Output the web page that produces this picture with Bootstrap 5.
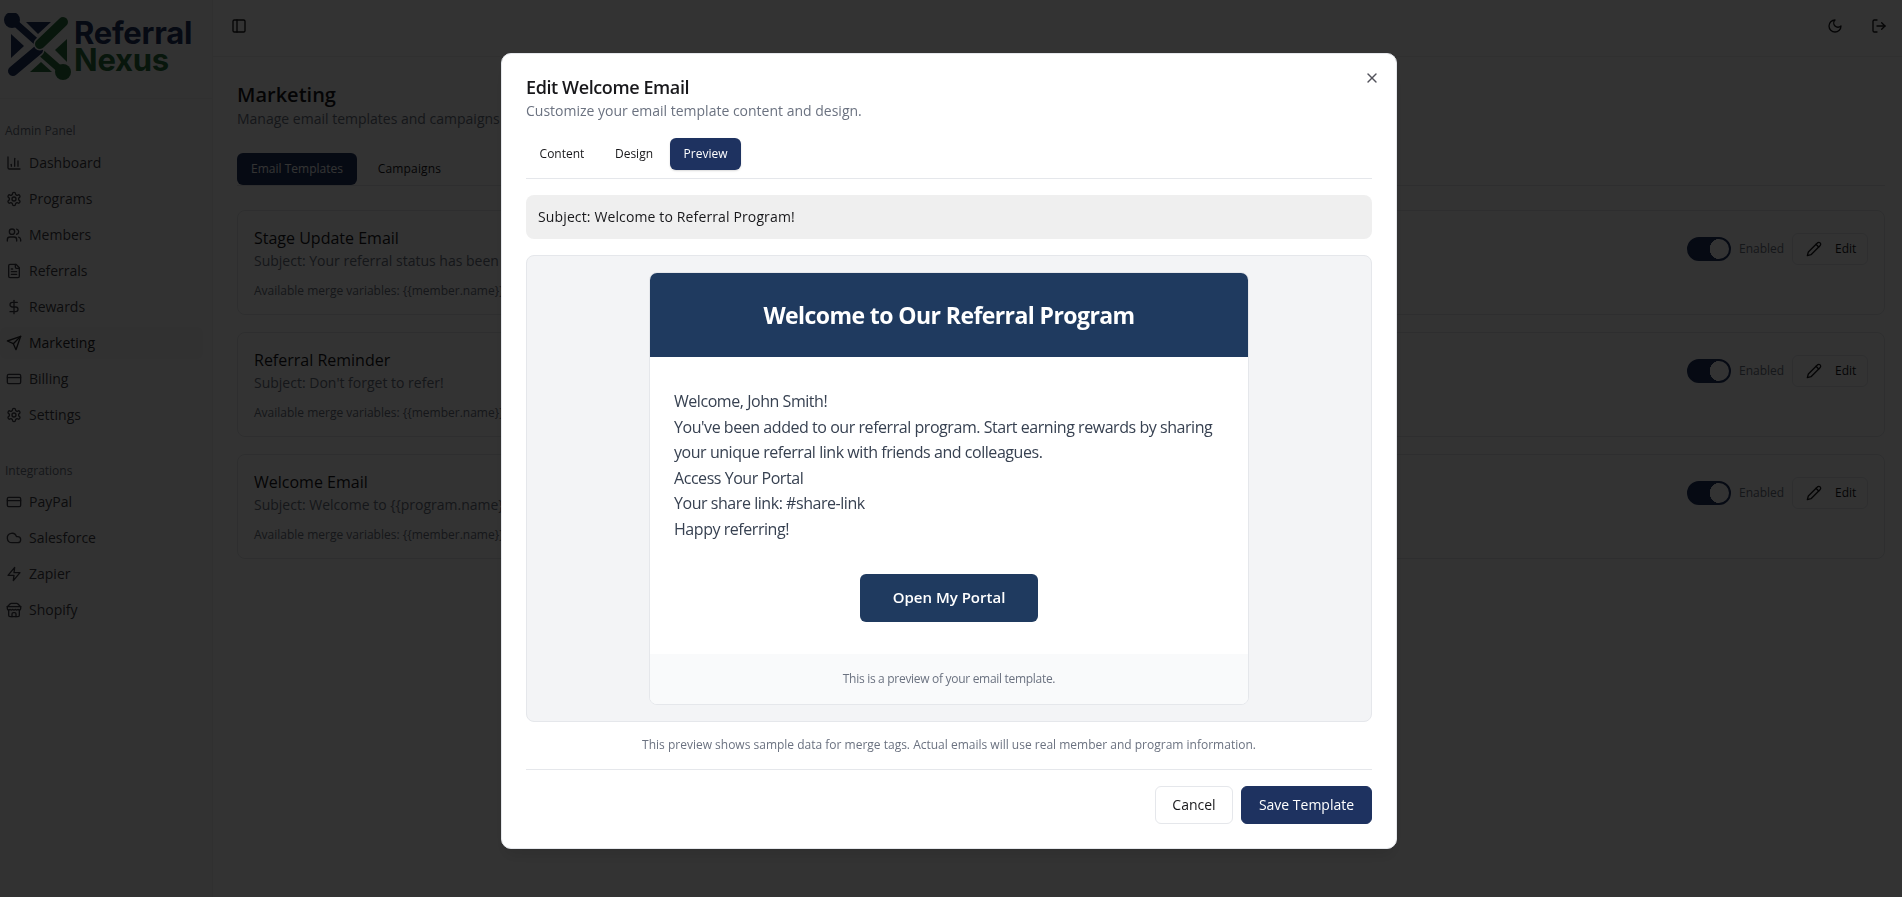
<!DOCTYPE html>
<html lang="en">
<head>
<meta charset="utf-8">
<title>Marketing</title>
<link rel="stylesheet" href="https://cdn.jsdelivr.net/npm/bootstrap@5.3.0/dist/css/bootstrap.min.css">
<style>
:root{--navy:#1e3260;--mailblue:#1f3a5f;--line:#e5e7eb;--muted:#6b7280;--leaf:#2a6f3c;}
html,body{height:100%;overflow:hidden;}
body{font-family:"Open Sans","Liberation Sans",sans-serif;font-size:14px;line-height:20px;color:#18181b;background:#fff;}
.ico{width:16px;height:16px;fill:none;stroke:currentColor;stroke-width:2;stroke-linecap:round;stroke-linejoin:round;flex:none;}
.shell{height:897px;}
.side{width:213px;flex:none;background:#fafafa;border-right:1px solid #f0f0f0;}
.brand{height:99px;border-bottom:1px solid #f0f0f0;padding:13px 0 0 4px;}
.brand svg{width:68px;height:68px;flex:none;}
.brand-name{font-family:Inter,"Liberation Sans",sans-serif;font-weight:700;font-size:31px;line-height:27px;letter-spacing:-.25px;margin-left:2px;margin-top:6px;}
.brand-name span{display:block;color:var(--navy);}
.brand-name span+span{color:var(--leaf);}
.side-label{font-size:12px;line-height:16px;color:#6b7280;padding-left:5px;}
.label-admin{margin-top:24px;}
.label-integrations{margin-top:32px;}
.side-nav{padding-right:9px;gap:4px;margin-top:8px;}
.nav-second{margin-top:7px;}
.side-link{height:32px;display:flex;align-items:center;gap:7px;padding-left:6px;color:#3f3f46;text-decoration:none;border-radius:6px;}
.side-link.on{background:#f4f4f5;color:#27272a;font-weight:500;}
.topbar{height:57px;border-bottom:1px solid #f0f0f0;padding:0 15px 4px 18px;}
.top-tools{gap:28px;}
.work{padding:24px 17px 0 24px;}
.page-title{font-size:20px;line-height:28px;font-weight:600;margin:0;}
.subtle{color:var(--muted);}
.tabline{border-bottom:1px solid #e5e7eb;gap:8px;height:33px;margin:24px 0;}
.tabbtn{height:32px;padding:0;text-align:center;font-size:12px;line-height:32px;font-weight:500;border-radius:6px;color:#18181b;background:none;border:0;}
.tabbtn.on{background:var(--navy);color:#fff;}
.w-email{width:120px;}.w-camp{width:89px;letter-spacing:.15px;}
.w-content{width:72px;}.w-design{width:64px;}.w-preview{width:71px;}
.tpl{border:1px solid var(--line);border-radius:8px;padding:16px 16px 15px;margin-bottom:17.5px;display:flex;justify-content:space-between;align-items:flex-start;}
.tpl h3{font-size:16px;line-height:22px;font-weight:500;margin:0 0 2px;}
.tpl small{display:block;font-size:12px;line-height:16px;margin-top:11.5px;color:var(--muted);}
.tpl-actions{gap:8px;margin-top:6px;}
.sw{padding:0;margin:4px 0 0;min-height:0;height:24px;display:flex;}
.form-switch.sw .form-check-input,.form-switch.sw .form-check-input:checked{width:44px;height:24px;margin:0;background-color:var(--navy);border:2px solid var(--navy);border-radius:12px;background-size:auto;background-position:0 0;background-image:radial-gradient(circle 10.5px at 31px 10px,#fff 96%,transparent 100%);}
.lbl-en{font-size:12px;line-height:16px;color:var(--muted);margin-top:8px;width:45px;white-space:nowrap;}
.editbtn{font-size:12px;line-height:16px;font-weight:500;height:32px;width:76px;padding:0 13px;display:flex;align-items:center;gap:13px;border:1px solid var(--line);border-radius:6px;background:#fff;color:#18181b;}
.shade{position:fixed;inset:0;background:#000;opacity:.8;z-index:1040;}
.dlg-wrap{position:fixed;inset:0;z-index:1050;padding-top:53px;}
.dlg{position:relative;width:896px;height:796px;margin-left:501px;background:#fff;border:1px solid #e5e7eb;border-radius:10px;padding:24px 24px 23px;box-shadow:0 10px 15px -3px rgba(0,0,0,.1);}
.dlg-x{position:absolute;top:16px;right:16px;padding:0;border:0;background:none;color:#52525b;line-height:0;}
.dlg h2{font-size:18px;line-height:18px;font-weight:600;margin:0;letter-spacing:-.4px;}
.dlg-sub{margin:5px 0 0;}
.dlg-tabs{border-bottom:1px solid var(--line);height:41px;margin-top:17px;gap:4px;}
.dlg-tabs .tabbtn.on{box-shadow:0 1px 2px rgba(0,0,0,.15);}
.subj{height:44px;background:#efefef;border-radius:8px;padding:0 12px;margin-top:16px;display:flex;align-items:center;color:#18181b;letter-spacing:.13px;}
.stage{height:467px;background:#f3f4f6;border:1px solid var(--line);border-radius:8px;margin-top:16px;padding-top:16px;}
.mail{width:600px;margin:0 auto;height:433px;background:#fff;border:1px solid var(--line);border-radius:8px;overflow:hidden;}
.mail-head{height:85px;background:var(--mailblue);color:#fff;margin:-1px -1px 0;}
.mail-head h1{font-size:23px;line-height:32px;font-weight:700;margin:0;letter-spacing:-.58px;}
.mail-body{padding:32px 24px;height:297px;font-size:16px;line-height:25.6px;color:#374151;letter-spacing:-.45px;}
.mail-cta{margin-top:31px;display:flex;justify-content:center;letter-spacing:0;}
.cta{width:178px;height:48px;border-radius:6px;background:var(--mailblue);border:0;color:#fff;font-size:15px;font-weight:600;}
.mail-foot{background:#f9fafb;height:50px;font-size:12px;line-height:18px;color:#6b7280;letter-spacing:-.3px;}
.note{font-size:12px;line-height:16px;text-align:center;color:var(--muted);margin:15px 0 0;}
.dlg-foot{border-top:1px solid var(--line);margin-top:16px;padding-top:16px;gap:8px;}
.act{height:38px;border-radius:6px;font-size:14px;font-weight:500;line-height:20px;padding:0;}
.act-ghost{width:78px;background:#fff;border:1px solid var(--line);color:#18181b;}
.act-main{width:131px;background:var(--navy);border:1px solid var(--navy);color:#fff;}
</style>
</head>
<body>
<svg width="0" height="0" class="d-block position-absolute" aria-hidden="true">
<symbol id="i-chart" viewBox="0 0 24 24"><path d="M3 3v16a2 2 0 0 0 2 2h16"/><path d="M18 17V9"/><path d="M13 17V5"/><path d="M8 17v-3"/></symbol>
<symbol id="i-gear" viewBox="0 0 24 24"><path d="M12.22 2h-.44a2 2 0 0 0-2 2v.18a2 2 0 0 1-1 1.73l-.43.25a2 2 0 0 1-2 0l-.15-.08a2 2 0 0 0-2.73.73l-.22.38a2 2 0 0 0 .73 2.73l.15.1a2 2 0 0 1 1 1.72v.51a2 2 0 0 1-1 1.74l-.15.09a2 2 0 0 0-.73 2.73l.22.38a2 2 0 0 0 2.73.73l.15-.08a2 2 0 0 1 2 0l.43.25a2 2 0 0 1 1 1.73V20a2 2 0 0 0 2 2h.44a2 2 0 0 0 2-2v-.18a2 2 0 0 1 1-1.73l.43-.25a2 2 0 0 1 2 0l.15.08a2 2 0 0 0 2.73-.73l.22-.39a2 2 0 0 0-.73-2.73l-.15-.08a2 2 0 0 1-1-1.74v-.5a2 2 0 0 1 1-1.74l.15-.09a2 2 0 0 0 .73-2.73l-.22-.38a2 2 0 0 0-2.73-.73l-.15.08a2 2 0 0 1-2 0l-.43-.25a2 2 0 0 1-1-1.73V4a2 2 0 0 0-2-2z"/><circle cx="12" cy="12" r="3"/></symbol>
<symbol id="i-users" viewBox="0 0 24 24"><path d="M16 21v-2a4 4 0 0 0-4-4H6a4 4 0 0 0-4 4v2"/><circle cx="9" cy="7" r="4"/><path d="M22 21v-2a4 4 0 0 0-3-3.87"/><path d="M16 3.13a4 4 0 0 1 0 7.75"/></symbol>
<symbol id="i-file" viewBox="0 0 24 24"><path d="M15 2H6a2 2 0 0 0-2 2v16a2 2 0 0 0 2 2h12a2 2 0 0 0 2-2V7Z"/><path d="M14 2v4a2 2 0 0 0 2 2h4"/><path d="M10 9H8"/><path d="M16 13H8"/><path d="M16 17H8"/></symbol>
<symbol id="i-dollar" viewBox="0 0 24 24"><path d="M12 2v20"/><path d="M17 5H9.5a3.5 3.5 0 0 0 0 7h5a3.5 3.5 0 0 1 0 7H6"/></symbol>
<symbol id="i-send" viewBox="0 0 24 24"><path d="m22 2-7 20-4-9-9-4Z"/><path d="M22 2 11 13"/></symbol>
<symbol id="i-card" viewBox="0 0 24 24"><rect x="2" y="5" width="20" height="14" rx="2"/><path d="M2 10h20"/></symbol>
<symbol id="i-cloud" viewBox="0 0 24 24"><path d="M17.5 19H9a7 7 0 1 1 6.71-9h1.79a4.5 4.5 0 1 1 0 9Z"/></symbol>
<symbol id="i-zap" viewBox="0 0 24 24"><path d="M13 2 3 14h9l-1 8 10-12h-9l1-8z"/></symbol>
<symbol id="i-store" viewBox="0 0 24 24"><path d="m2 7 4.41-4.41A2 2 0 0 1 7.83 2h8.34a2 2 0 0 1 1.42.59L22 7"/><path d="M4 12v8a2 2 0 0 0 2 2h12a2 2 0 0 0 2-2v-8"/><path d="M15 22v-4a2 2 0 0 0-2-2h-2a2 2 0 0 0-2 2v4"/><path d="M2 7h20"/><path d="M22 7v3a2 2 0 0 1-2 2a2.7 2.7 0 0 1-1.59-.63.7.7 0 0 0-.82 0A2.7 2.7 0 0 1 16 12a2.7 2.7 0 0 1-1.59-.63.7.7 0 0 0-.82 0A2.7 2.7 0 0 1 12 12a2.7 2.7 0 0 1-1.59-.63.7.7 0 0 0-.82 0A2.7 2.7 0 0 1 8 12a2.7 2.7 0 0 1-1.59-.63.7.7 0 0 0-.82 0A2.7 2.7 0 0 1 4 12a2 2 0 0 1-2-2V7"/></symbol>
<symbol id="i-panel" viewBox="0 0 24 24"><rect x="3" y="3" width="18" height="18" rx="2"/><path d="M9 3v18"/></symbol>
<symbol id="i-moon" viewBox="0 0 24 24"><path d="M12 3a6 6 0 0 0 9 9 9 9 0 1 1-9-9Z"/></symbol>
<symbol id="i-out" viewBox="0 0 24 24"><path d="M9 21H5a2 2 0 0 1-2-2V5a2 2 0 0 1 2-2h4"/><path d="m16 17 5-5-5-5"/><path d="M21 12H9"/></symbol>
<symbol id="i-pen" viewBox="0 0 24 24"><path d="M17 3a2.85 2.83 0 1 1 4 4L7.5 20.5 2 22l1.5-5.5Z"/><path d="m15 5 4 4"/></symbol>
<symbol id="i-x" viewBox="0 0 24 24"><path d="M18 6 6 18"/><path d="m6 6 12 12"/></symbol>
</svg>

<div class="shell d-flex">
  <aside class="side d-flex flex-column">
    <div class="brand d-flex align-items-start">
      <svg viewBox="4 13 68 68" aria-hidden="true" fill="none" stroke-linecap="round">
        <g fill="#1e3260"><path d="M26 22h25L38 34Z"/><path d="M11 34v24l13-12Z"/></g>
        <g fill="#2a6f3c"><path d="M67 39v23L55 50Z"/><path d="M30 72h22L41 62Z"/></g>
        <path d="M12 20 40 45" stroke="#fafafa" stroke-width="10"/>
        <path d="M12 20 40 45" stroke="#1e3260" stroke-width="7"/>
        <circle cx="12" cy="20" r="8" fill="#1e3260"/>
        <path d="M38 50 63 72" stroke="#fafafa" stroke-width="10"/>
        <path d="M38 50 63 72" stroke="#2a6f3c" stroke-width="7"/>
        <circle cx="63" cy="72" r="8" fill="#2a6f3c"/>
        <path d="M13 71 38 50" stroke="#fafafa" stroke-width="13"/>
        <path d="M13 71 38 50" stroke="#1e3260" stroke-width="10"/>
        <path d="M63 22 40 44" stroke="#fafafa" stroke-width="13"/>
        <path d="M63 22 40 44" stroke="#2a6f3c" stroke-width="10"/>
      </svg>
      <div class="brand-name"><span>Referral</span><span>Nexus</span></div>
    </div>
    <div class="side-label label-admin">Admin Panel</div>
    <nav class="side-nav d-flex flex-column">
      <a class="side-link" href="#"><svg class="ico"><use href="#i-chart"/></svg>Dashboard</a>
      <a class="side-link" href="#"><svg class="ico"><use href="#i-gear"/></svg>Programs</a>
      <a class="side-link" href="#"><svg class="ico"><use href="#i-users"/></svg>Members</a>
      <a class="side-link" href="#"><svg class="ico"><use href="#i-file"/></svg>Referrals</a>
      <a class="side-link" href="#"><svg class="ico"><use href="#i-dollar"/></svg>Rewards</a>
      <a class="side-link on" href="#"><svg class="ico"><use href="#i-send"/></svg>Marketing</a>
      <a class="side-link" href="#"><svg class="ico"><use href="#i-card"/></svg>Billing</a>
      <a class="side-link" href="#"><svg class="ico"><use href="#i-gear"/></svg>Settings</a>
    </nav>
    <div class="side-label label-integrations">Integrations</div>
    <nav class="side-nav nav-second d-flex flex-column">
      <a class="side-link" href="#"><svg class="ico"><use href="#i-card"/></svg>PayPal</a>
      <a class="side-link" href="#"><svg class="ico"><use href="#i-cloud"/></svg>Salesforce</a>
      <a class="side-link" href="#"><svg class="ico"><use href="#i-zap"/></svg>Zapier</a>
      <a class="side-link" href="#"><svg class="ico"><use href="#i-store"/></svg>Shopify</a>
    </nav>
  </aside>
  <div class="flex-grow-1 d-flex flex-column">
    <header class="topbar d-flex align-items-center justify-content-between">
      <svg class="ico"><use href="#i-panel"/></svg>
      <div class="d-flex top-tools"><svg class="ico"><use href="#i-moon"/></svg><svg class="ico"><use href="#i-out"/></svg></div>
    </header>
    <main class="work">
      <h1 class="page-title">Marketing</h1>
      <div class="subtle">Manage email templates and campaigns</div>
      <div class="tabline d-flex">
        <button class="tabbtn on w-email">Email Templates</button>
        <button class="tabbtn w-camp">Campaigns</button>
      </div>
      <section class="tpl">
        <div><h3>Stage Update Email</h3><div class="subtle">Subject: Your referral status has been updated</div><small>Available merge variables: {{member.name}}, {{program.name}}, {{stage.name}}</small></div>
        <div class="tpl-actions d-flex">
          <div class="form-check form-switch sw"><input class="form-check-input" type="checkbox" role="switch" checked aria-label="Enabled"></div>
          <span class="lbl-en">Enabled</span>
          <button class="editbtn"><svg class="ico"><use href="#i-pen"/></svg>Edit</button>
        </div>
      </section>
      <section class="tpl">
        <div><h3>Referral Reminder</h3><div class="subtle">Subject: Don't forget to refer!</div><small>Available merge variables: {{member.name}}, {{program.name}}, {{share.link}}</small></div>
        <div class="tpl-actions d-flex">
          <div class="form-check form-switch sw"><input class="form-check-input" type="checkbox" role="switch" checked aria-label="Enabled"></div>
          <span class="lbl-en">Enabled</span>
          <button class="editbtn"><svg class="ico"><use href="#i-pen"/></svg>Edit</button>
        </div>
      </section>
      <section class="tpl">
        <div><h3>Welcome Email</h3><div class="subtle">Subject: Welcome to {{program.name}}</div><small>Available merge variables: {{member.name}}, {{program.name}}, {{share.link}}</small></div>
        <div class="tpl-actions d-flex">
          <div class="form-check form-switch sw"><input class="form-check-input" type="checkbox" role="switch" checked aria-label="Enabled"></div>
          <span class="lbl-en">Enabled</span>
          <button class="editbtn"><svg class="ico"><use href="#i-pen"/></svg>Edit</button>
        </div>
      </section>
    </main>
  </div>
</div>

<div class="shade"></div>
<div class="dlg-wrap">
  <div class="dlg" role="dialog" aria-label="Edit Welcome Email">
    <button class="dlg-x" aria-label="Close"><svg class="ico"><use href="#i-x"/></svg></button>
    <h2>Edit Welcome Email</h2>
    <p class="dlg-sub subtle">Customize your email template content and design.</p>
    <div class="dlg-tabs d-flex align-items-start">
      <button class="tabbtn w-content">Content</button>
      <button class="tabbtn w-design">Design</button>
      <button class="tabbtn on w-preview">Preview</button>
    </div>
    <div class="subj">Subject: Welcome to Referral Program!</div>
    <div class="stage">
      <div class="mail">
        <div class="mail-head d-flex align-items-center justify-content-center"><h1>Welcome to Our Referral Program</h1></div>
        <div class="mail-body">
          Welcome, John Smith!<br>
          You've been added to our referral program. Start earning rewards by sharing your unique referral link with friends and colleagues.<br>
          Access Your Portal<br>
          Your share link: #share-link<br>
          Happy referring!
          <div class="mail-cta"><button class="cta">Open My Portal</button></div>
        </div>
        <div class="mail-foot d-flex align-items-center justify-content-center">This is a preview of your email template.</div>
      </div>
    </div>
    <p class="note">This preview shows sample data for merge tags. Actual emails will use real member and program information.</p>
    <div class="dlg-foot d-flex justify-content-end">
      <button class="act act-ghost">Cancel</button>
      <button class="act act-main">Save Template</button>
    </div>
  </div>
</div>
<script src="https://cdn.jsdelivr.net/npm/bootstrap@5.3.0/dist/js/bootstrap.bundle.min.js"></script>
</body>
</html>
